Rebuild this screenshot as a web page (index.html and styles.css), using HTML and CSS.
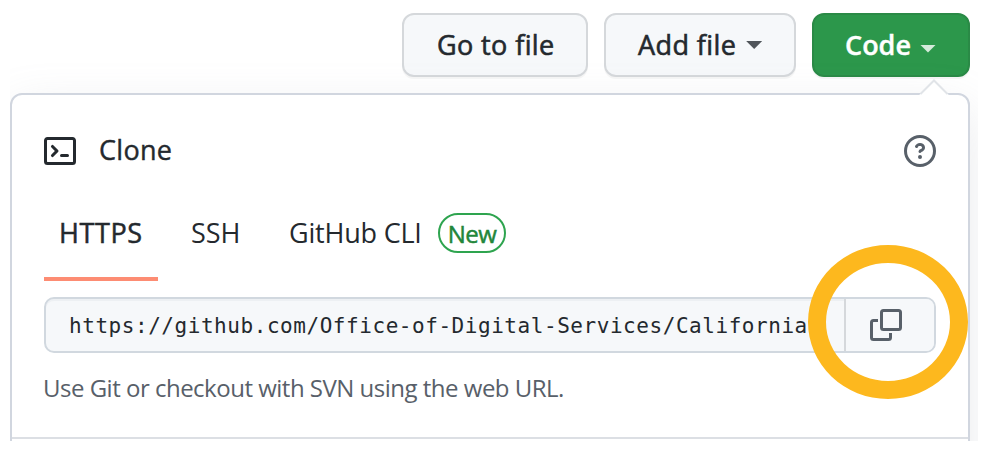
FILE: index.html
```html
<!DOCTYPE html>
<html lang="en">
<head>
<meta charset="utf-8">
<title>Clone repository</title>
<link rel="stylesheet" href="styles.css">
</head>
<body>
<main class="view">
  <div class="toolbar">
    <button class="btn btn-go"><span class="t-go">Go to file</span></button>
    <button class="btn btn-add"><span class="t-add">Add file</span><i class="caret"></i></button>
    <button class="btn btn-code"><span class="t-code">Code</span><i class="caret"></i></button>
  </div>
  <section class="popover">
    <svg class="arrow" width="32" height="16" viewBox="0 0 32 16"><path d="M1 16 3 14.8 16 1.8 29 14.8 31 16Z" fill="#fff"/><path d="M2.5 15 16 1.5 29.5 15" fill="none" stroke="#e1e4e8" stroke-width="2"/></svg>
    <header class="head">
      <svg width="32" height="32" viewBox="0 0 16 16" fill="#24292e"><path fill-rule="evenodd" d="M0 2.75C0 1.784.784 1 1.75 1h12.5c.966 0 1.75.784 1.75 1.75v10.5A1.75 1.75 0 0114.25 15H1.75A1.75 1.75 0 010 13.25V2.75zm1.75-.25a.25.25 0 00-.25.25v10.500c0 .138.112.25.25.25h12.5a.25.25 0 00.25-.25V2.750a.25.25 0 00-.25-.25H1.750zM7.250 8a.75.75 0 01-.22.53l-2.25 2.250a.75.75 0 11-1.060-1.060L5.440 8 3.720 6.280a.75.75 0 111.060-1.060l2.250 2.250c.141.14.22.331.22.53zm1.500 1.500a.75.75 0 000 1.500h3a.75.75 0 000-1.500h-3z"/></svg>
      <span class="t-clone">Clone</span>
      <svg class="help" width="32" height="32" viewBox="0 0 16 16" fill="#586069"><path fill-rule="evenodd" d="M8 1.500a6.500 6.500 0 100 13 6.500 6.500 0 000-13zM0 8a8 8 0 1116 0A8 8 0 010 8zm9 3a1 1 0 11-2 0 1 1 0 012 0zM6.920 6.085c.081-.16.19-.299.34-.398.145-.097.371-.187.74-.187.280 0 .553.087.738.225A.613.613 0 019 6.250c0 .177-.040.264-.077.318a.956.956 0 01-.277.245c-.076.051-.158.100-.258.161l-.007.004a7.728 7.728 0 00-.313.195 2.416 2.416 0 00-.692.661.750.750 0 001.248.832.956.956 0 01.276-.240 5.970 5.970 0 01.260-.160l.007-.004c.093-.057.204-.123.313-.195.222-.149.487-.355.692-.662.214-.320.329-.702.329-1.155 0-.760-.360-1.348-.863-1.725A2.760 2.760 0 008 4c-.631 0-1.155.160-1.572.438-.413.276-.680.638-.849.977a.750.750 0 101.342.670z"/></svg>
    </header>
    <nav class="tabs">
      <span class="tab active"><span class="t-https">HTTPS</span></span>
      <span class="tab ssh"><span class="t-ssh">SSH</span></span>
      <span class="tab cli"><span class="t-cli">GitHub CLI</span><span class="label">New</span></span>
    </nav>
    <div class="field">
      <span class="url">https://github.com/Office-of-Digital-Services/California</span>
      <button class="copy"><svg width="32" height="32" viewBox="0 0 32 32" fill="none" stroke="#586069" stroke-width="3"><rect x="11.500" y="1.500" width="19" height="19" rx="2"/><path d="M8 11.500H3.500a2 2 0 0 0-2 2v15a2 2 0 0 0 2 2h15a2 2 0 0 0 2-2V24"/></svg></button>
      <span class="ring"></span>
    </div>
    <p class="hint">Use Git or checkout with SVN using the web URL.</p>
  </section>
</main>
</body>
</html>
```
FILE: styles.css
```css
* { box-sizing: border-box; }
body { margin: 0; background: #fff; color: #24292e; font-family: "Open Sans", "Noto Sans", sans-serif; font-size: 26px; overflow: hidden; }
.view { width: 968px; height: 441px; margin-left: 10px; padding-top: 13px; overflow: hidden; }
.toolbar { display: flex; justify-content: flex-end; gap: 16px; padding-right: 8px; position: relative; z-index: 1; }
.btn { height: 64px; border: 2px solid #d5d8db; border-radius: 12px; background: #f6f8fa; color: #24292e; font: 500 27px/60px "Open Sans", sans-serif; padding: 0; display: flex; align-items: center; padding-left: 33px; white-space: nowrap; box-shadow: 0 2px 0 rgba(27,31,35,.04); }
.t-go, .t-add { letter-spacing: .4px; -webkit-text-stroke: .6px #24292e; }
.btn-go { width: 186px; }
.btn-add { width: 192px; padding-left: 32px; }
.btn-code { width: 158px; padding-left: 31px; background: #2c974b; border-color: #2a8a46; color: #fff; font-weight: 600; }
.t-code { width: 66px; -webkit-text-stroke: .4px #fff; }
.caret { flex: none; width: 16px; height: 8px; margin-left: 10px; background: #50555a; clip-path: polygon(0 0, 100% 0, 50% 100%); }
.btn-code .caret { margin-left: 9px; background: #d5eadb; margin-top: 7px; }
.popover { position: relative; z-index: 2; width: 960px; height: 400px; margin-top: 16px; border: 2px solid #d1d6df; border-radius: 12px; background: #fff; box-shadow: 0 16px 48px rgba(149,157,165,.2); }
.arrow { position: absolute; right: 18px; top: -16px; }
.head { display: flex; align-items: center; height: 32px; margin: 40px 32px 0; }
.t-clone { margin: -4px 0 0 23px; font-size: 27px; letter-spacing: .3px; -webkit-text-stroke: .4px #24292e; }
.help { margin-left: auto; }
.tabs { display: flex; height: 114px; margin-left: 32px; line-height: 36px; font-size: 27px; white-space: nowrap; }
.tab { height: 114px; padding: 48px 16px 0; }
.active { border-bottom: 4px solid #fd8c73; width: 114px; padding-left: 15px; letter-spacing: .6px; -webkit-text-stroke: .5px #24292e; }
.ssh { width: 98px; padding-left: 33px; }
.cli { display: flex; padding-left: 33px; }
.t-cli { width: 133px; letter-spacing: -.2px; }
.label { width: 68px; height: 40px; margin: -2px 0 0 16px; border: 2px solid #2ea44f; border-radius: 20px; color: #22863a; font-size: 24px; line-height: 38px; text-align: center; letter-spacing: -.5px; -webkit-text-stroke: .5px #22863a; }
.field { display: flex; position: relative; width: 892px; height: 56px; margin: 16px 0 0 32px; border: 2px solid #d1d8df; border-radius: 10px; background: #f6f8fa; box-shadow: inset 0 2px 0 #edf0f3; }
.url { width: 798px; padding-left: 23px; font: 21px/54px "DejaVu Sans Mono", monospace; letter-spacing: .55px; white-space: nowrap; }
.copy { flex: 1; padding: 0; border: 0; border-left: 2px solid #d5d8db; border-radius: 0 8px 8px 0; background: #f6f8fa; display: grid; place-items: center; padding-right: 8px; }
.ring { position: absolute; left: 762px; top: -54px; width: 160px; height: 154px; border: 18px solid #fdb81e; border-radius: 50%; }
.hint { margin: 0; height: 86px; padding: 17px 0 0 31px; border-bottom: 2px solid #dcdfe4; color: #586069; font-size: 24px; line-height: 36px; letter-spacing: -.5px; white-space: nowrap; }
```
